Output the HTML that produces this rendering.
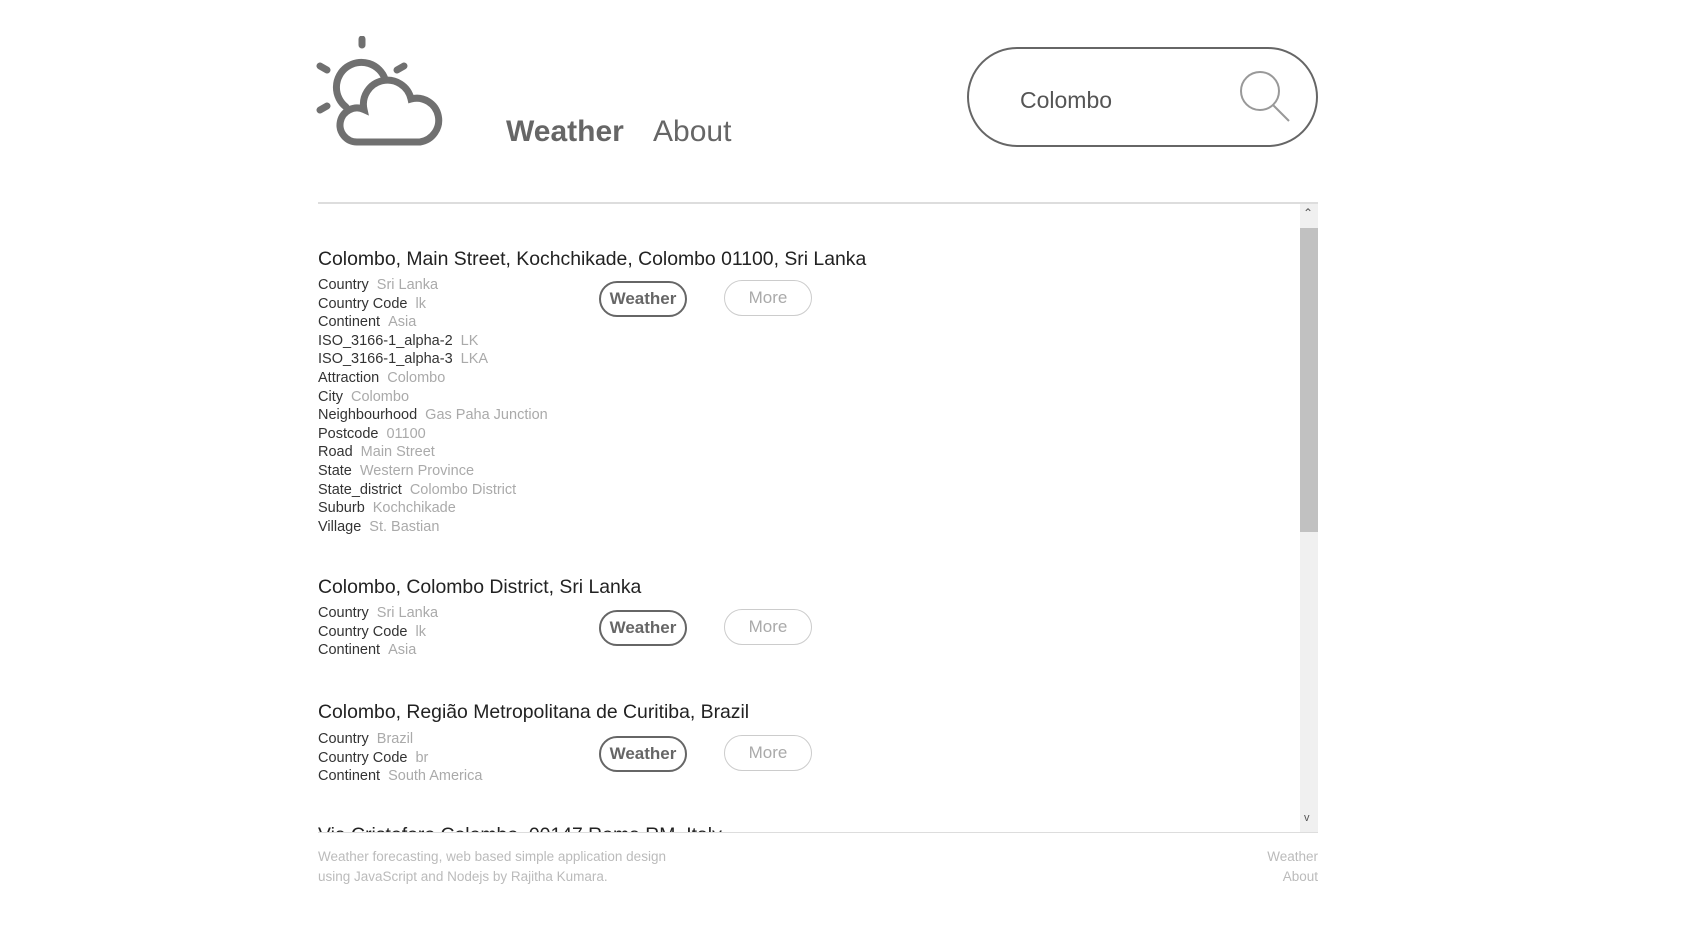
<!DOCTYPE html>
<html><head><meta charset="utf-8"><style>
body{margin:0;width:1684px;height:948px;background:#fff;font-family:"Liberation Sans",sans-serif;position:relative;overflow:hidden;color:#333}
.a{position:absolute}
.nav{font-size:30px;color:#666;top:115px}
.pill{left:967px;top:47px;width:347px;height:96px;border:2px solid #666;border-radius:50px}
.hr{left:318px;top:202px;width:1000px;height:2px;background:#ddd}
.list{left:318px;top:204px;width:982px;height:628px;overflow:hidden}
.t{position:absolute;left:0;font-size:19.4px;color:#222;white-space:nowrap}
.rows{position:absolute;left:0;font-size:14.5px;line-height:18.6px;white-space:nowrap}
.rows span{color:#aaa;margin-left:8px}
.bw{position:absolute;left:281px;width:88px;height:36px;border:2px solid #666;border-radius:20px;box-sizing:border-box;text-align:center;line-height:32px;font-size:17px;font-weight:bold;color:#666}
.bm{position:absolute;left:406px;width:88px;height:36px;border:1px solid #ccc;border-radius:20px;box-sizing:border-box;text-align:center;line-height:34px;font-size:17px;color:#aaa}
.sb{left:1300px;top:204px;width:18px;height:628px;background:#f0f0f0}
.foot{font-size:13.5px;color:#bbb;line-height:20px}
</style></head><body>
<svg class="a" style="left:316px;top:36px" width="130" height="112" viewBox="0 0 130 112" fill="none" stroke="#707070" stroke-width="7" stroke-linecap="round">
<line x1="46" y1="3" x2="46" y2="9"/>
<line x1="4" y1="30" x2="11" y2="34"/>
<line x1="81" y1="34" x2="88" y2="30"/>
<line x1="4" y1="74" x2="11" y2="70"/>
<path d="M30 71 A25 25 0 1 1 69 43"/>
<path d="M41 106 A17 17 0 1 1 48 73.5 A24 24 0 0 1 95 63 A22 22 0 1 1 104 106 Z"/>
</svg>
<div class="a nav" style="left:506px;font-weight:bold;color:#666">Weather</div>
<div class="a nav" style="left:653px">About</div>
<div class="a pill"></div>
<div class="a" style="left:1020px;top:87px;font-size:23px;color:#555">Colombo</div>
<svg class="a" style="left:1239px;top:70px" width="56" height="54" fill="none" stroke="#999" stroke-width="2"><circle cx="21" cy="21" r="19"/><line x1="34" y1="35" x2="50" y2="51"/></svg>
<div class="a hr"></div>
<div class="a list">
<div class="t" style="top:44px">Colombo, Main Street, Kochchikade, Colombo 01100, Sri Lanka</div>
<div class="rows" style="top:72px">Country<span>Sri Lanka</span><br>Country Code<span>lk</span><br>Continent<span>Asia</span><br>ISO_3166-1_alpha-2<span>LK</span><br>ISO_3166-1_alpha-3<span>LKA</span><br>Attraction<span>Colombo</span><br>City<span>Colombo</span><br>Neighbourhood<span>Gas Paha Junction</span><br>Postcode<span>01100</span><br>Road<span>Main Street</span><br>State<span>Western Province</span><br>State_district<span>Colombo District</span><br>Suburb<span>Kochchikade</span><br>Village<span>St. Bastian</span></div>
<div class="bw" style="top:77px">Weather</div><div class="bm" style="top:76px">More</div>

<div class="t" style="top:372px">Colombo, Colombo District, Sri Lanka</div>
<div class="rows" style="top:400px">Country<span>Sri Lanka</span><br>Country Code<span>lk</span><br>Continent<span>Asia</span></div>
<div class="bw" style="top:406px">Weather</div><div class="bm" style="top:405px">More</div>

<div class="t" style="top:497px">Colombo, Região Metropolitana de Curitiba, Brazil</div>
<div class="rows" style="top:526px">Country<span>Brazil</span><br>Country Code<span>br</span><br>Continent<span>South America</span></div>
<div class="bw" style="top:532px">Weather</div><div class="bm" style="top:531px">More</div>

<div class="t" style="top:620px">Via Cristoforo Colombo, 00147 Roma RM, Italy</div>
</div>
<div class="a sb"></div>
<div class="a" style="left:1300px;top:228px;width:18px;height:304px;background:#c1c1c1"></div>
<div class="a" style="left:1303px;top:206px;font-size:12px;color:#555">&#8963;</div>
<div class="a" style="left:1304px;top:812px;font-size:11px;color:#555">v</div>
<div class="a" style="left:318px;top:832px;width:1000px;height:1px;background:#ddd"></div>
<div class="a foot" style="left:318px;top:847px">Weather forecasting, web based simple application design<br>using JavaScript and Nodejs by Rajitha Kumara.</div>
<div class="a foot" style="left:1218px;width:100px;top:847px;text-align:right">Weather<br>About</div>
</body></html>
